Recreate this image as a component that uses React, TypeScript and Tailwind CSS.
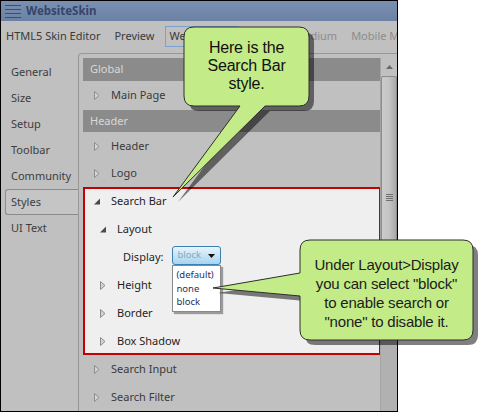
import React from 'react'

const NAV = ['General', 'Size', 'Setup', 'Toolbar', 'Community', 'Styles', 'UI Text']

function Collapsed() {
  return (
    <svg width="6" height="9" viewBox="0 0 6 9" className="shrink-0">
      <path d="M0.5 0.5 L5 4.5 L0.5 8.5 Z" fill="#d2d2d2" stroke="#8e8e8e" />
    </svg>
  )
}

function Expanded() {
  return (
    <svg width="6" height="9" viewBox="0 0 6 9" className="shrink-0">
      <path d="M6 1.5 L6 7.5 L0 7.5 Z" fill="#4a4a4a" />
    </svg>
  )
}

interface RowProps {
  label: string
  open?: boolean
  sub?: boolean
  dark?: boolean
  h: string
}

function Row({ label, open, sub, dark, h }: RowProps) {
  return (
    <div
      className={`flex items-center gap-[11px] ${h} ${sub ? 'pl-[17px]' : 'pl-[11px]'} ${dark ? 'text-[#1e1e1e]' : 'text-[#3a3a3a]'}`}
    >
      {open ? <Expanded /> : <Collapsed />}
      <span>{label}</span>
    </div>
  )
}

function Section({ label, h }: { label: string; h: string }) {
  return (
    <div className={`flex items-center bg-[#8b8b8b] pl-[7px] text-[#d8d8d8] ${h}`}>{label}</div>
  )
}

function Scrollbar() {
  return (
    <div className="flex w-[17px] flex-col border-l border-[#a4a4a4] bg-[#b1b1b1]">
      <div className="flex h-[18px] items-center justify-center bg-[#c0c0c0]">
        <svg width="7" height="4" viewBox="0 0 7 4">
          <path d="M0 4 L3.5 0 L7 4 Z" fill="#6a6a6a" />
        </svg>
      </div>
      <div className="flex h-[242px] items-center justify-center rounded-[2px] border border-[#8c8c8c] bg-gradient-to-r from-[#cbcbcb] via-[#c4c4c4] to-[#a9a9a9]">
        <div className="flex flex-col gap-[1px]">
          <div className="h-px w-[7px] bg-[#6e6e6e]" />
          <div className="h-px w-[7px] bg-[#6e6e6e]" />
          <div className="h-px w-[7px] bg-[#6e6e6e]" />
          <div className="h-px w-[7px] bg-[#6e6e6e]" />
        </div>
      </div>
    </div>
  )
}

function DisplayRow() {
  return (
    <div className="flex h-[28px] items-center pl-[40px] text-[#1e1e1e]">
      <span>Display:</span>
      <div className="relative ml-[9px] mb-[3px]">
        <div className="flex h-[19px] w-[49px] items-center justify-between rounded-[3px] border border-[#3c7fb1] bg-gradient-to-b from-[#e6f4fc] to-[#a6d4f1] pl-[4px] pr-[5px] text-[9.5px] text-[#8ea6b6]">
          <span>block</span>
          <svg width="7" height="4" viewBox="0 0 7 4">
            <path d="M0 0 L7 0 L3.5 4 Z" fill="#111" />
          </svg>
        </div>
        <div className="absolute left-0 top-[19px] z-10 flex w-[49px] flex-col border border-[#8a8a8a] bg-white pb-[2px] pl-[3px] pt-[2px] text-[9.5px] leading-[13.5px] text-[#1f3260] shadow-[2px_2px_1px_rgba(0,0,0,0.35)]">
          <span>(default)</span>
          <span>none</span>
          <span>block</span>
        </div>
      </div>
    </div>
  )
}

function Callouts() {
  const c1 =
    'M194 27 H299 Q309 27 309 37 V96 Q309 106 299 106 H265 L173 197 L240 106 H194 Q184 106 184 96 V37 Q184 27 194 27 Z'
  const c2 =
    'M310 240 H463 Q473 240 473 250 V330 Q473 340 463 340 H310 Q300 340 300 330 V296 L213 288 L300 273 V250 Q300 240 310 240 Z'
  return (
    <>
      <svg width="488" height="412" viewBox="0 0 488 412" className="pointer-events-none absolute left-0 top-0 z-20">
        <g opacity="0.5" transform="translate(5 5)">
          <path d={c1} fill="#000" />
        </g>
        <path d={c1} fill="#c3eb87" stroke="#2e2e2e" strokeWidth="1" />
        <g opacity="0.5" transform="translate(5 5)">
          <path d={c2} fill="#000" />
        </g>
        <path d={c2} fill="#c3eb87" stroke="#2e2e2e" strokeWidth="1" />
      </svg>
      <div className="absolute left-[184px] top-[39px] z-30 w-[125px] text-center font-['Liberation_Sans',Arial,sans-serif] text-[16px] leading-[18px] tracking-[-0.2px] text-[#111]">
        Here is the
        <br />
        Search Bar
        <br />
        style.
      </div>
      <div className="absolute left-[300px] top-[255px] z-30 w-[173px] text-center font-['Liberation_Sans',Arial,sans-serif] text-[15px] leading-[19px] tracking-[-0.2px] text-[#1c1c1c]">
        Under Layout&gt;Display
        <br />
        you can select "block"
        <br />
        to enable search or
        <br />
        "none" to disable it.
      </div>
    </>
  )
}

export default function App() {
  return (
    <div className="relative h-[412px] w-[488px] overflow-hidden bg-white font-['Noto_Sans',sans-serif] text-[11px]">
      <div className="flex h-[412px] w-[398px] flex-col border border-black bg-[#c0c0c0]">
        <div className="flex h-[20px] items-center bg-gradient-to-b from-[#7a90b1] to-[#6b82a5] pl-[4px]">
          <svg width="16" height="14" viewBox="0 0 16 14">
            <rect x="0" y="1" width="16" height="1" fill="#3d4f70" />
            <rect x="0" y="5" width="16" height="1" fill="#3d4f70" />
            <rect x="0" y="9" width="16" height="1" fill="#3d4f70" />
            <rect x="0" y="13" width="16" height="1" fill="#3d4f70" />
          </svg>
          <span className="ml-[5px] text-[11.5px] font-bold text-[#34466a]">WebsiteSkin</span>
        </div>

        <div className="flex h-[31px] items-center overflow-hidden whitespace-nowrap text-[#3a3a3a]">
          <span className="pl-[5px]">HTML5 Skin Editor</span>
          <div className="ml-[7px] h-[17px] w-px bg-[#9c9c9c]" />
          <span className="ml-[7px]">Preview</span>
          <div className="ml-[8px] h-[17px] w-px bg-[#9c9c9c]" />
          <div className="ml-[2px] flex h-[21px] w-[84px] items-center border border-[#7ba1cf] pl-[4px]">
            Web Medium
          </div>
          <span className="ml-[21px] text-[#8c8c8c]">Tablet Medium</span>
          <span className="ml-[14px] text-[#8c8c8c]">Mobile Medium</span>
        </div>

        <div className="flex flex-1">
          <div className="flex w-[77px] flex-col pt-[7px] text-[#3d3d3d]">
            {NAV.map((item) =>
              item === 'Styles' ? (
                <div
                  key={item}
                  className="ml-[4px] flex h-[26px] items-center rounded-l-[3px] border-y border-l border-[#8c8c8c] bg-[#c5c5c5] pl-[5px]"
                >
                  {item}
                </div>
              ) : (
                <div key={item} className="flex h-[26px] items-center pl-[10px]">
                  {item}
                </div>
              ),
            )}
          </div>

          <div className="mt-[1px] flex flex-1 rounded-tl-[4px] border-l border-t border-[#979797] pl-[4px] pt-[4px]">
            <div className="flex flex-1 flex-col">
              <Section label="Global" h="h-[23px]" />
              <Row label="Main Page" h="h-[29px]" />
              <Section label="Header" h="h-[22px]" />
              <Row label="Header" h="h-[28px]" />
              <Row label="Logo" h="h-[27px]" />
              <div className="mr-[-1px] flex flex-col bg-[#efefef] outline-2 -outline-offset-2 outline-[#c40000]">
                <Row label="Search Bar" open dark h="h-[28px]" />
                <Row label="Layout" open sub dark h="h-[28px]" />
                <DisplayRow />
                <Row label="Height" sub dark h="h-[28px]" />
                <Row label="Border" sub dark h="h-[28px]" />
                <Row label="Box Shadow" sub dark h="h-[28px]" />
              </div>
              <Row label="Search Input" h="h-[28px]" />
              <Row label="Search Filter" h="h-[28px]" />
            </div>
            <Scrollbar />
          </div>
        </div>
      </div>
      <Callouts />
    </div>
  )
}
